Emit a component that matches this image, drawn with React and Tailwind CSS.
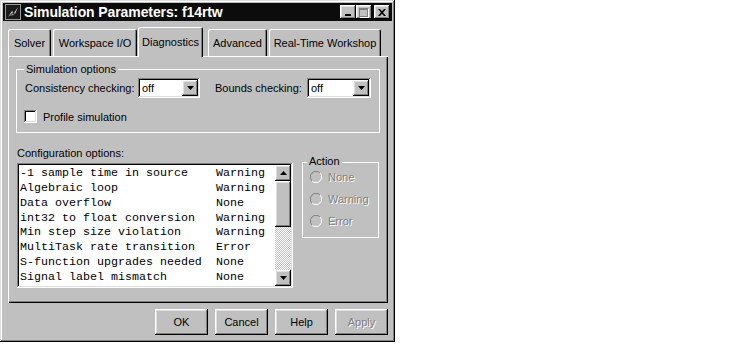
import React from "react";

const ui = "font-['Liberation_Sans',Arial,sans-serif] text-[11px] leading-[14px] whitespace-nowrap";
const raised = "shadow-[inset_-1px_-1px_#000,inset_1px_1px_#fff,inset_-2px_-2px_#808080,inset_2px_2px_#dfdfdf]";
const sunken = "shadow-[inset_-1px_-1px_#fff,inset_1px_1px_#808080,inset_-2px_-2px_#dfdfdf,inset_2px_2px_#000]";
const disabledText = "text-[#808080] [text-shadow:1px_1px_0_#fff]";

function TitleButton({ children }) {
  return (
    <div className={`w-[16px] h-[14px] bg-[#c0c0c0] ${raised} flex items-center justify-center`}>
      {children}
    </div>
  );
}

function Tab({ label, w, ml, selected }) {
  if (selected) {
    return (
      <div
        className={`relative z-10 h-[30px] mb-[-1px] bg-[#c0c0c0] rounded-t-[2px] shadow-[inset_1px_1px_#fff,inset_-1px_0_#000,inset_-2px_0_#808080] flex items-center justify-center pb-[1px]`}
        style={{ width: w, marginLeft: ml }}
      >
        {label}
      </div>
    );
  }
  return (
    <div
      className="h-[27px] bg-[#c0c0c0] rounded-t-[2px] shadow-[inset_1px_1px_#fff,inset_-1px_0_#000,inset_-2px_0_#808080] flex items-center justify-center"
      style={{ width: w, marginLeft: ml }}
    >
      {label}
    </div>
  );
}

function Combo({ w }) {
  return (
    <div className={`h-[20px] bg-white ${sunken} flex items-center p-[2px]`} style={{ width: w }}>
      <span className="flex-1 pl-[2px]">off</span>
      <div className={`w-[16px] h-[16px] bg-[#c0c0c0] ${raised} flex items-center justify-center`}>
        <svg width="7" height="4" viewBox="0 0 7 4"><path d="M0 0h7L3.5 4z" fill="#000" /></svg>
      </div>
    </div>
  );
}

function Radio({ label }) {
  return (
    <div className="h-[22px] pt-[6px] flex items-center">
      <svg width="12" height="12" viewBox="0 0 12 12" className="ml-[7px]">
        <circle cx="6" cy="6" r="5" fill="#c0c0c0" />
        <path d="M10 2A5.5 5.5 0 0 0 2 10" stroke="#808080" strokeWidth="1" fill="none" />
        <path d="M2 10A5.5 5.5 0 0 0 10 2" stroke="#fff" strokeWidth="1" fill="none" />
      </svg>
      <span className={`ml-[6px] ${disabledText}`}>{label}</span>
    </div>
  );
}

const rows = [
  ["-1 sample time in source", "Warning"],
  ["Algebraic loop", "Warning"],
  ["Data overflow", "None"],
  ["int32 to float conversion", "Warning"],
  ["Min step size violation", "Warning"],
  ["MultiTask rate transition", "Error"],
  ["S-function upgrades needed", "None"],
  ["Signal label mismatch", "None"],
];

function Button({ label, disabled }) {
  return (
    <div className={`w-[53px] h-[26px] bg-[#c0c0c0] ${raised} flex items-center justify-center ${disabled ? disabledText : ""}`}>
      {label}
    </div>
  );
}

export default function App() {
  return (
    <div className="w-[750px] h-[358px] bg-white">
      <div className={`w-[395px] h-[342px] bg-[#c0c0c0] text-black ${ui} shadow-[inset_-1px_-1px_#000,inset_1px_1px_#dfdfdf,inset_-2px_-2px_#808080,inset_2px_2px_#fff] flex flex-col`}>
        {/* Title bar */}
        <div className="mt-[3px] mx-[3px] h-[18px] bg-[#0c0c0c] flex items-center">
          <svg width="16" height="16" viewBox="0 0 16 16" className="ml-[2px]">
            <rect x="0" y="0" width="16" height="16" fill="#1a1a1a" />
            <rect x="0.5" y="0.5" width="15" height="15" fill="none" stroke="#9a9a9a" />
            <path d="M3 13L7 7L9 9L13 3L10 10L8 8z" fill="#d8d8d8" />
            <path d="M5 12L8 9L9 11z" fill="#8a8a8a" />
          </svg>
          <span className="ml-[3px] text-white font-bold text-[14px] leading-[18px] tracking-[-0.1px]">
            Simulation Parameters: f14rtw
          </span>
          <div className="ml-auto mr-[2px] flex">
            <TitleButton>
              <div className="w-[6px] h-[2px] bg-black mt-[6px] mr-[1px]" />
            </TitleButton>
            <TitleButton>
              <div className="w-[9px] h-[9px] border border-[#808080] border-t-2 shadow-[1px_1px_0_#fff] mr-[1px]" />
            </TitleButton>
            <div className="ml-[2px]">
              <TitleButton>
                <svg width="8" height="7" viewBox="0 0 8 7">
                  <path d="M0 0h2l2 2.2L6 0h2L5 3.5 8 7H6L4 4.8 2 7H0l3-3.5z" fill="#000" />
                </svg>
              </TitleButton>
            </div>
          </div>
        </div>

        {/* Tabs */}
        <div className="mt-[6px] h-[29px] flex items-end">
          <Tab label="Solver" w={43} ml={8} />
          <Tab label="Workspace I/O" w={84} ml={2} />
          <Tab label="Diagnostics" w={65} ml={1} selected />
          <Tab label="Advanced" w={59} ml={5} />
          <Tab label="Real-Time Workshop" w={112} ml={2} />
        </div>

        {/* Panel */}
        <div className="ml-[8px] w-[380px] h-[247px] bg-[#c0c0c0] shadow-[inset_1px_1px_#fff,inset_-1px_-1px_#000,inset_-2px_-2px_#808080] flex flex-col">
          {/* Simulation options group */}
          <div className="relative ml-[8px] mt-[13px] w-[364px] h-[64px] border border-white">
            <span className="absolute left-[7px] top-[-8px] px-[2px] bg-[#c0c0c0]">Simulation options</span>
            <div className="mt-[8px] flex items-center h-[20px]">
              <span className="ml-[8px] w-[113px]">Consistency checking:</span>
              <Combo w={62} />
              <span className="ml-[15px] w-[92px]">Bounds checking:</span>
              <Combo w={64} />
            </div>
            <div className="mt-[12px] flex items-center h-[13px]">
              <div className={`ml-[7px] w-[13px] h-[13px] bg-white ${sunken}`} />
              <span className="ml-[6px]">Profile simulation</span>
            </div>
          </div>

          {/* Config + Action */}
          <div className="mt-[13px] flex items-start">
            <div className="ml-[9px] flex flex-col">
              <span className="h-[14px]">Configuration options:</span>
              <div className={`mt-[3px] w-[276px] h-[125px] bg-white ${sunken} p-[2px] flex`}>
                <div className="flex-1 pl-[1px] pt-[1px] font-['Liberation_Mono','Courier_New',monospace] text-[11.66px] leading-[14.86px] whitespace-pre">
                  {rows.map(([a, b]) => (
                    <div key={a} className="flex">
                      <span className="w-[196px]">{a}</span>
                      <span>{b}</span>
                    </div>
                  ))}
                </div>
                <div className="w-[16px] flex flex-col">
                  <div className={`h-[16px] bg-[#c0c0c0] ${raised} flex items-center justify-center`}>
                    <svg width="7" height="4" viewBox="0 0 7 4"><path d="M0 4h7L3.5 0z" fill="#000" /></svg>
                  </div>
                  <div className={`h-[46px] bg-[#c0c0c0] ${raised}`} />
                  <div className="flex-1 bg-[repeating-conic-gradient(#c0c0c0_0_25%,#ffffff_0_50%)] bg-[length:2px_2px]" />
                  <div className={`h-[16px] bg-[#c0c0c0] ${raised} flex items-center justify-center`}>
                    <svg width="7" height="4" viewBox="0 0 7 4"><path d="M0 0h7L3.5 4z" fill="#000" /></svg>
                  </div>
                </div>
              </div>
            </div>
            <div className="relative ml-[9px] mt-[16px] w-[77px] h-[76px] border border-white">
              <span className="absolute left-[4px] top-[-9px] px-[2px] bg-[#c0c0c0]">Action</span>
              <Radio label="None" />
              <Radio label="Warning" />
              <Radio label="Error" />
            </div>
          </div>
        </div>

        {/* Buttons */}
        <div className="mt-[6px] ml-[155px] flex gap-[7px]">
          <Button label="OK" />
          <Button label="Cancel" />
          <Button label="Help" />
          <Button label="Apply" disabled />
        </div>
      </div>
    </div>
  );
}
